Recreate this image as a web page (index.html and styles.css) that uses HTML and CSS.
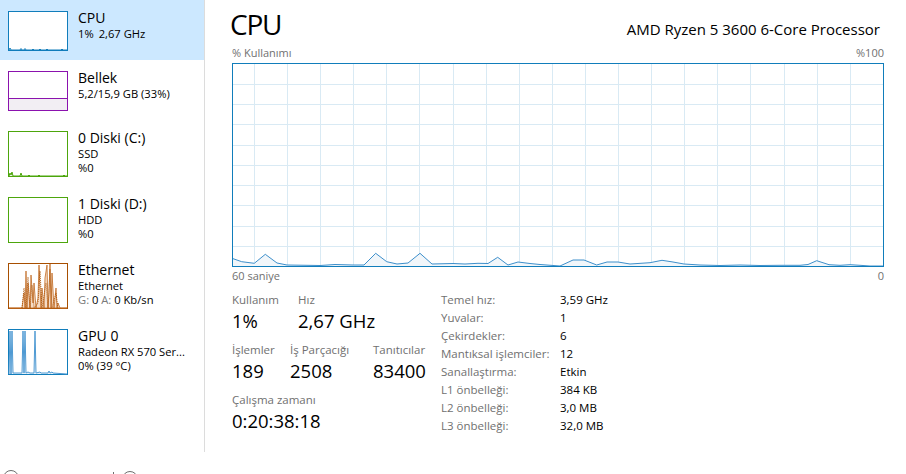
FILE: index.html
```html
<!DOCTYPE html>
<html lang="tr">
<head>
<meta charset="utf-8">
<title>Görev Yöneticisi - CPU</title>
<link rel="stylesheet" href="styles.css">
</head>
<body>
<div class="app">
  <aside class="side">
    <div class="item sel">
      <svg class="thumb" width="60" height="40" viewBox="0 0 60 40">
        <rect x="0.5" y="0.5" width="59" height="39" fill="#fff" stroke="#117dbb"/>
        <polyline points="1,39 2,37 3,39 12,39 13,37.5 14,39 16,39 17,37.5 18,39 24,39 25,38 26,39 31,39 32,38 33,39 38,39 39,38 40,39 53,39 54,38 55,39 59,39" fill="none" stroke="#117dbb" stroke-width="1"/>
      </svg>
      <div class="txt">
        <div class="t1">CPU</div>
        <div class="t2"><span class="gap">1%</span>2,67 GHz</div>
      </div>
    </div>
    <div class="item">
      <svg class="thumb" width="60" height="40" viewBox="0 0 60 40">
        <rect x="0.5" y="0.5" width="59" height="39" fill="#fff" stroke="#8b12ae"/>
        <rect x="1" y="27.5" width="58" height="11.5" fill="#f2eef3"/>
        <line x1="1" y1="27.5" x2="59" y2="27.5" stroke="#8b12ae"/>
      </svg>
      <div class="txt">
        <div class="t1">Bellek</div>
        <div class="t2">5,2/15,9 GB (33%)</div>
      </div>
    </div>
    <div class="item">
      <svg class="thumb" width="60" height="46" viewBox="0 0 60 46">
        <rect x="0.5" y="0.5" width="59" height="45" fill="#fff" stroke="#4da60c"/>
        <polyline points="1,45 2,42 3,44 4,41 5,45 12,45 13,42 14,45 20,45 21,44 22,45 30,45 31,44 32,45 55,45 56,44 57,45 59,45" fill="#e9f4e0" stroke="#4da60c" stroke-width="1"/>
      </svg>
      <div class="txt">
        <div class="t1">0 Diski (C:)</div>
        <div class="t2">SSD</div>
        <div class="t2">%0</div>
      </div>
    </div>
    <div class="item">
      <svg class="thumb" width="60" height="46" viewBox="0 0 60 46">
        <rect x="0.5" y="0.5" width="59" height="45" fill="#fff" stroke="#4da60c"/>
      </svg>
      <div class="txt">
        <div class="t1">1 Diski (D:)</div>
        <div class="t2">HDD</div>
        <div class="t2">%0</div>
      </div>
    </div>
    <div class="item">
      <svg class="thumb" width="60" height="46" viewBox="0 0 60 46">
        <rect x="0.5" y="0.5" width="59" height="45" fill="#fff" stroke="#a74f01"/>
        <polygon points="1,45 14,45 16,30 17,45 18,8 19,45 20,20 22,45 23,12 25,40 26,20 28,45 30,35 31,2 33,45 34,25 36,45 37,15 39,2 40,45 41,30 42,1 43,45 44,10 46,45 48,25 49,45 50,40 52,45 59,45" fill="#f5dcc6" stroke="#c06a22" stroke-width="0.8"/>
        <polyline points="14,45 16,25 18,45 20,14 22,45 24,22 26,45 30,40 32,8 34,45 38,20 40,45 42,6 44,45 48,30 50,45" fill="none" stroke="#a74f01" stroke-width="0.8" stroke-dasharray="1 1"/>
      </svg>
      <div class="txt">
        <div class="t1">Ethernet</div>
        <div class="t2">Ethernet</div>
        <div class="t2"><span class="dim">G:</span> 0 <span class="dim">A:</span> 0 Kb/sn</div>
      </div>
    </div>
    <div class="item">
      <svg class="thumb" width="60" height="46" viewBox="0 0 60 46">
        <rect x="0.5" y="0.5" width="59" height="45" fill="#fff" stroke="#117dbb"/>
        <polyline points="1,45 2,2 3,45 4,2 5,44 14,44 15,2 16,44 17,2 18,44 20,43 22,44 26,44 27,2 28,44 32,43 33,44 40,44 41,42 42,44 44,43 45,44 59,45" fill="#e4f0f9" stroke="#4f9ad3" stroke-width="1"/>
      </svg>
      <div class="txt">
        <div class="t1">GPU 0</div>
        <div class="t2">Radeon RX 570 Ser...</div>
        <div class="t2">0%  (39 °C)</div>
      </div>
    </div>
  </aside>

  <main class="main">
    <div class="head">
      <div class="title">CPU</div>
      <div class="model">AMD Ryzen 5 3600 6-Core Processor</div>
    </div>
    <div class="axis axis-top"><span>% Kullanımı</span><span>%100</span></div>
    <svg class="graph" width="652" height="204" viewBox="0 0 652 204">
      <path d="M22.5 0V204M55.5 0V204M88.5 0V204M121.5 0V204M154.5 0V204M187.5 0V204M221.5 0V204M254.5 0V204M287.5 0V204M320.5 0V204M353.5 0V204M386.5 0V204M419.5 0V204M452.5 0V204M485.5 0V204M518.5 0V204M552.5 0V204M585.5 0V204M618.5 0V204M0 21.5H652M0 41.5H652M0 61.5H652M0 82.5H652M0 102.5H652M0 122.5H652M0 142.5H652M0 163.5H652M0 183.5H652" stroke="#d9eaf4" stroke-width="1" fill="none"/>
      <polygon points="0,195.3 9.7,198.7 22.3,200.3 33.3,191.3 45,200 55,202 88,202.5 103,201.5 121,202 132,202 143.7,190.3 154.7,198.7 165,201 176,200 188,190.3 200,201 221,200.5 233,201 246,200.3 256,200.5 265.7,194.3 276,202 286,199 298,200.5 308,201.5 328,203 341,197 352,197 364.7,202 375,199 386,199 398,201 418,199.7 430,197.3 441,199 452,201 468,202 488,202.5 508,202 528,202.5 548,202.3 568,202.3 576,201.5 584.7,197.7 597,201.7 608,202.3 618,201.7 628,202.3 638,203 652,203 652,204 0,204" fill="#f1f6fa"/>
      <polyline points="0,195.3 9.7,198.7 22.3,200.3 33.3,191.3 45,200 55,202 88,202.5 103,201.5 121,202 132,202 143.7,190.3 154.7,198.7 165,201 176,200 188,190.3 200,201 221,200.5 233,201 246,200.3 256,200.5 265.7,194.3 276,202 286,199 298,200.5 308,201.5 328,203 341,197 352,197 364.7,202 375,199 386,199 398,201 418,199.7 430,197.3 441,199 452,201 468,202 488,202.5 508,202 528,202.5 548,202.3 568,202.3 576,201.5 584.7,197.7 597,201.7 608,202.3 618,201.7 628,202.3 638,203 652,203" fill="none" stroke="#3d8fcb" stroke-width="1"/>
      <rect x="0.5" y="0.5" width="651" height="203" fill="none" stroke="#117dbb" stroke-width="1"/>
    </svg>
    <div class="axis axis-bot"><span>60 saniye</span><span>0</span></div>

    <div class="stats">
      <div class="live">
        <div class="row">
          <div class="stat w66"><div class="lbl">Kullanım</div><div class="val">1%</div></div>
          <div class="stat"><div class="lbl">Hız</div><div class="val">2,67 GHz</div></div>
        </div>
        <div class="row">
          <div class="stat w58"><div class="lbl">İşlemler</div><div class="val">189</div></div>
          <div class="stat w83"><div class="lbl">İş Parçacığı</div><div class="val">2508</div></div>
          <div class="stat"><div class="lbl">Tanıtıcılar</div><div class="val">83400</div></div>
        </div>
        <div class="row">
          <div class="stat"><div class="lbl">Çalışma zamanı</div><div class="val">0:20:38:18</div></div>
        </div>
      </div>
      <div class="spec">
        <div class="k">Temel hız:</div><div class="v">3,59 GHz</div>
        <div class="k">Yuvalar:</div><div class="v">1</div>
        <div class="k">Çekirdekler:</div><div class="v">6</div>
        <div class="k">Mantıksal işlemciler:</div><div class="v">12</div>
        <div class="k">Sanallaştırma:</div><div class="v">Etkin</div>
        <div class="k">L1 önbelleği:</div><div class="v">384 KB</div>
        <div class="k">L2 önbelleği:</div><div class="v">3,0 MB</div>
        <div class="k">L3 önbelleği:</div><div class="v">32,0 MB</div>
      </div>
    </div>
  </main>
</div>
<div class="footer">
  <svg width="906" height="22" viewBox="0 0 906 22">
    <circle cx="11" cy="26" r="7.5" fill="none" stroke="#6e6e6e" stroke-width="1"/>
    <line x1="113.5" y1="20" x2="113.5" y2="22" stroke="#6e6e6e"/>
    <circle cx="130" cy="27" r="7.5" fill="none" stroke="#6e6e6e" stroke-width="1"/>
  </svg>
</div>
</body>
</html>
```

FILE: styles.css
```css
html, body {
  margin: 0;
  padding: 0;
}

body {
  width: 906px;
  height: 474px;
  overflow: hidden;
  background: #fff;
  color: #000;
  font-family: "Open Sans", "Noto Sans", "Liberation Sans", sans-serif;
}

.app {
  display: flex;
  height: 452px;
}

/* Sidebar */
.side {
  width: 204px;
  flex: none;
  border-right: 1px solid #dcdcdc;
}

.item {
  display: flex;
  gap: 10px;
  padding: 11px 0 9px 8px;
}

.item.sel {
  background: #cce8ff;
}

.thumb {
  display: block;
  flex: none;
}

.txt {
  margin-top: -3.5px;
  white-space: nowrap;
}

.t1 {
  font-size: 14px;
  line-height: 19px;
}

.t2 {
  font-size: 11.2px;
  line-height: 14px;
}

.gap {
  margin-right: 5px;
}

.dim {
  color: #7a7a7a;
}

/* Main */
.main {
  flex: 1;
  min-width: 0;
  padding: 0 22px 0 27px;
}

.head {
  display: flex;
  justify-content: space-between;
  align-items: baseline;
  padding-top: 6px;
}

.title {
  font-size: 28px;
  line-height: 36px;
  font-weight: 400;
  letter-spacing: -1.2px;
  margin-left: -2px;
}

.model {
  font-size: 15px;
  line-height: 20px;
  margin-right: 4px;
}

.axis {
  display: flex;
  justify-content: space-between;
  font-size: 11px;
  line-height: 14px;
  color: #707070;
}

.axis-top {
  margin-top: 4px;
}

.axis-bot {
  margin-top: 2px;
}

.graph {
  display: block;
  margin-top: 3px;
}

/* Stats */
.stats {
  display: flex;
  align-items: flex-start;
  margin-top: 7.5px;
}

.live {
  width: 209px;
  flex: none;
  margin-top: 1.5px;
}

.row {
  display: flex;
  margin-bottom: 9px;
  white-space: nowrap;
}

.w66 { width: 66px; }
.w58 { width: 58px; }
.w83 { width: 83px; }

.lbl {
  font-size: 11.5px;
  line-height: 15px;
  color: #707070;
}

.val {
  font-size: 18.5px;
  line-height: 24px;
  margin-top: 2px;
}

.spec {
  display: grid;
  grid-template-columns: 119px auto;
  font-size: 11.5px;
  line-height: 18px;
  white-space: nowrap;
}

.spec .k {
  color: #707070;
}

.spec .v {
  color: #000;
}

.footer {
  height: 22px;
}

.footer svg {
  display: block;
}
```
